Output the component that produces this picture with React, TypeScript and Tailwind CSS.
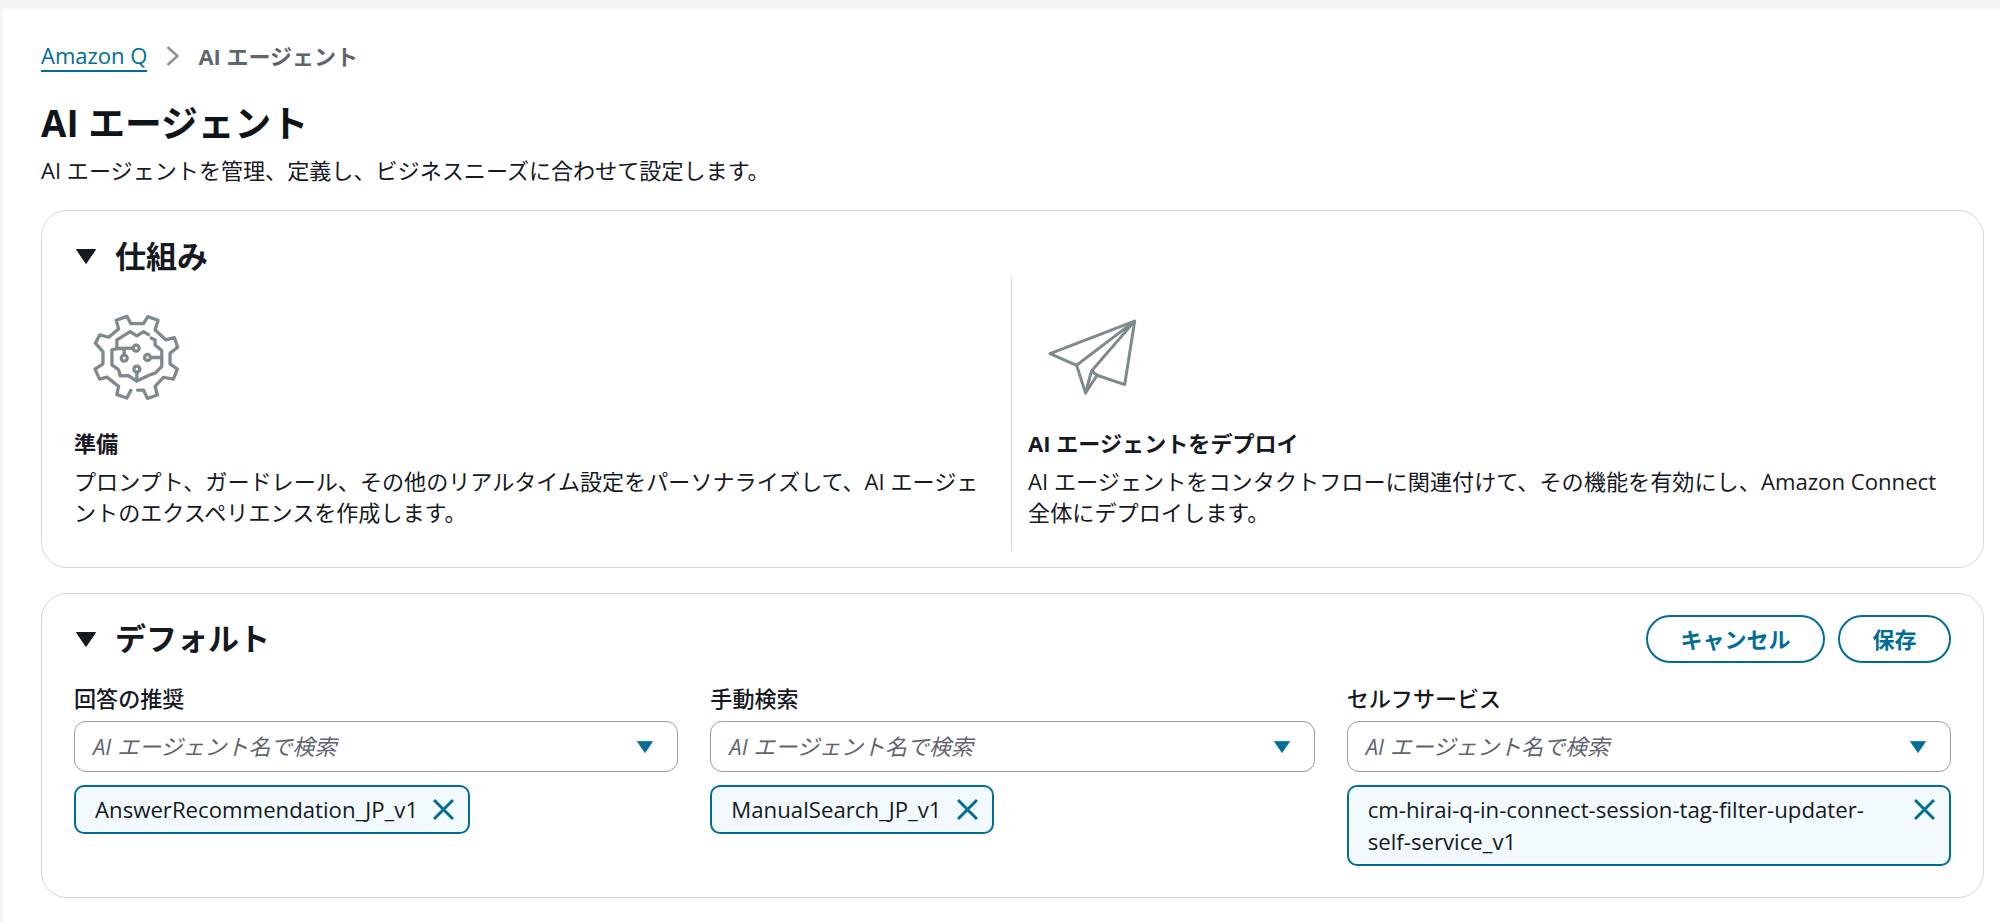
import React from "react";

const font = { fontFamily: '"Open Sans", "Noto Sans CJK JP", sans-serif' };

function Caret({ className }: { className: string }) {
  return (
    <svg viewBox="0 0 20 15" className={className}>
      <polygon points="0.5,0.5 19.5,0.5 10,14.5" fill="currentColor" stroke="currentColor" strokeLinejoin="round" />
    </svg>
  );
}

function GearIcon() {
  return (
    <svg viewBox="98 72 262 262" className="block w-[87px] h-[87px] text-[#7f8a8f]" fill="none" stroke="currentColor" strokeWidth="10" strokeLinejoin="round" strokeLinecap="round">
      <path d="M232 301 L250 301 L262 326 L292 316 L285 290 L310 263 L340 268 L352 238 L330 222 L330 190 L353 172 L343 143 L318 150 L285 120 L294 91 L263 80 L250 101 L212 101 L200 79 L168 91 L175 117 L145 142 L118 135 L105 160 L128 185 L128 222 L104 238 L118 268 L140 262 L175 290 L170 315 L200 325 L212 302" />
      <path d="M265 134 L250 125 L230 138 L210 125 L170 150 L170 176 L155 180 L155 225 L175 240 L180 258 L205 258 L230 274 L270 255 L285 250 L305 230 L305 182 L285 165 L285 150 L273 144" />
      <path d="M170 176 L219 175 M192 178 L192 196 M271 203 L305 203 M230 247 L230 274" />
      <circle cx="228" cy="175" r="9" />
      <circle cx="192" cy="205" r="9" />
      <circle cx="262" cy="203" r="9" />
      <circle cx="230" cy="238" r="9" />
    </svg>
  );
}

function PlaneIcon() {
  return (
    <svg viewBox="84 56 268 228" className="block w-[89px] h-[76px] text-[#7f8a8f]" fill="none" stroke="currentColor" strokeWidth="9" strokeLinejoin="round" strokeLinecap="round">
      <path d="M345 62 L90 160 L170 195 L197 278 L232 225 L315 253 Z" />
      <path d="M170 195 L345 62 M215 212 L345 62 M215 212 L197 278 M215 212 L232 225" />
    </svg>
  );
}

function XIcon() {
  return (
    <svg viewBox="0 0 20 20" className="block w-[21px] h-[21px] shrink-0 mt-[5px] text-[#006d96]" fill="none" stroke="currentColor" strokeWidth="2.8">
      <path d="M1 1 L19 19 M19 1 L1 19" />
    </svg>
  );
}

function Field({ label, value, full }: { label: string; value: string; full?: boolean }) {
  return (
    <div className="flex flex-col items-start min-w-0">
      <div className="text-[22.08px] leading-[32px] font-medium text-[#16191f]">{label}</div>
      <div className="mt-[7px] w-full h-[51px] rounded-[12px] border border-[#9a9aa2] bg-white pl-[18px] pr-[24px] flex items-center justify-between">
        <span className="italic text-[22px] text-[#5f6570]">AI エージェント名で検索</span>
        <Caret className="w-[16px] h-[12px] text-[#006d96]" />
      </div>
      <div className={`mt-[13px] flex items-start gap-[15px] rounded-[10px] border-2 border-[#006d96] bg-[#f2fafd] pl-[19px] pr-[14px] pt-[7px] pb-[6px] ${full ? "w-full justify-between" : ""}`}>
        <span className="text-[22.2px] leading-[32px] text-[#16191f] min-w-0 max-w-[520px]">{value}</span>
        <XIcon />
      </div>
    </div>
  );
}

export default function App() {
  return (
    <div style={font} className="min-h-[922px] bg-[#f5f5f5] pt-[9px] pl-[3px] text-[#16191f]">
      <main className="min-h-[913px] bg-white pl-[38px] pr-[16px] pt-[31px]">
        <nav className="flex items-center h-[32px] text-[22px]">
          <a className="text-[#006d96] border-b-2 border-[#006d96] leading-[30px] h-[32px]">Amazon Q</a>
          <svg viewBox="0 0 13 20" className="ml-[19px] mr-[19px] w-[13px] h-[20px] text-[#8d9199]" fill="none" stroke="currentColor" strokeWidth="2.5">
            <path d="M1.5 1 L11.5 10 L1.5 19" />
          </svg>
          <span className="font-bold text-[#5f6570]">AI エージェント</span>
        </nav>
        <h1 className="mt-[29px] text-[36.8px] leading-[44px] font-bold text-[#0f141a]">AI エージェント</h1>
        <p className="mt-[9px] text-[22.08px] leading-[32px]">AI エージェントを管理、定義し、ビジネスニーズに合わせて設定します。</p>

        <section className="mt-[24px] h-[358px] rounded-[26px] border border-[#d5d7db] pl-[32px] pr-[32px] pt-[25px]">
          <div className="flex items-center h-[40px] gap-[19px]">
            <Caret className="ml-[2px] w-[20px] h-[15px] text-[#16191f]" />
            <h2 className="text-[31px] leading-[40px] font-bold">仕組み</h2>
          </div>
          <div className="mt-[1px] flex h-[274px]">
            <div className="w-[938px] shrink-0 border-r border-[#d5d7db] pr-[20px]">
              <div className="ml-[19px] pt-[37px] h-[122px]"><GearIcon /></div>
              <div className="mt-[28px] text-[22.08px] leading-[32px] font-bold">準備</div>
              <p className="mt-[7px] text-[22.08px] leading-[31px]">プロンプト、ガードレール、その他のリアルタイム設定をパーソナライズして、AI エージェントのエクスペリエンスを作成します。</p>
            </div>
            <div className="flex-1 pl-[16px]">
              <div className="ml-[20px] pt-[42px] h-[122px]"><PlaneIcon /></div>
              <div className="mt-[28px] text-[22.08px] leading-[32px] font-bold">AI エージェントをデプロイ</div>
              <p className="mt-[7px] text-[22.15px] leading-[31px]">AI エージェントをコンタクトフローに関連付けて、その機能を有効にし、Amazon Connect 全体にデプロイします。</p>
            </div>
          </div>
        </section>

        <section className="mt-[25px] rounded-[26px] border border-[#d5d7db] px-[32px] pt-[21px] pb-[31px]">
          <div className="flex items-center justify-between h-[48px]">
            <div className="flex items-center gap-[19px]">
              <Caret className="ml-[2px] w-[20px] h-[15px] text-[#16191f]" />
              <h2 className="text-[31px] leading-[40px] font-bold relative -top-px">デフォルト</h2>
            </div>
            <div className="flex gap-[13px]">
              <button className="w-[179px] h-[48px] rounded-full border-2 border-[#006d96] text-[#006d96] text-[22px] font-semibold">キャンセル</button>
              <button className="w-[113px] h-[48px] rounded-full border-2 border-[#006d96] text-[#006d96] text-[22px] font-semibold">保存</button>
            </div>
          </div>
          <div className="mt-[19px] grid grid-cols-3 gap-[32px]">
            <Field label="回答の推奨" value="AnswerRecommendation_JP_v1" />
            <Field label="手動検索" value="ManualSearch_JP_v1" />
            <Field label="セルフサービス" value="cm-hirai-q-in-connect-session-tag-filter-updater-self-service_v1" full />
          </div>
        </section>
      </main>
    </div>
  );
}
